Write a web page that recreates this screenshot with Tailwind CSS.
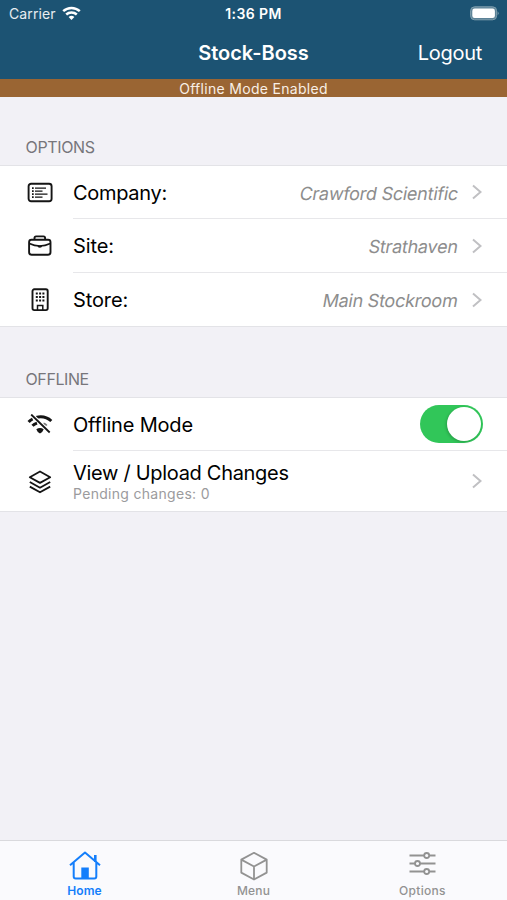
<!DOCTYPE html>
<html lang="en">
<head>
<meta charset="utf-8">
<title>Stock-Boss</title>
<script src="https://cdn.jsdelivr.net/npm/@tailwindcss/browser@4"></script>
</head>
<body class="w-[507px] h-[900px] overflow-hidden bg-[#f2f1f6] font-['Inter',sans-serif] text-black flex flex-col">
<header class="h-[79px] shrink-0 bg-[#1c5373] text-white">
  <div class="h-[27px] grid grid-cols-3 items-center px-[9px]">
    <div class="flex items-center gap-1.5 text-[14px] leading-[27px] text-white/90"><span class="tracking-[0.1px]">Carrier</span>
      <svg class="w-[19px] h-[15px]" viewBox="0 0 19 15" fill="none" stroke="#fff" stroke-width="2.500"><path d="M1.200 5.200C6 .8 13 .8 17.800 5.200M4.200 8.500c3-2.800 7.600-2.800 10.600 0"/><path d="M9.500 14l-2.900-3q2.900-2.300 5.800 0z" fill="#fff" stroke="none"/></svg>
    </div>
    <div class="text-center text-[14px] font-semibold tracking-[0.4px]">1:36 PM</div>
    <svg class="justify-self-end -mr-px w-[29px] h-[15px]" viewBox="0 0 29 15"><rect x=".6" y=".8" width="26" height="13" rx="4" fill="#5c8297" stroke="#7f9fae"/><rect x="2.300" y="2.600" width="22.600" height="9.400" rx="2.300" fill="#fff"/><path d="M27.600 5.200q2 2.100 0 4.200z" fill="#7f9fae"/></svg>
  </div>
  <div class="h-[52px] grid grid-cols-[1fr_auto_1fr] items-center px-[25px]">
    <span></span>
    <h1 class="text-[20px] font-semibold">Stock-Boss</h1>
    <span class="justify-self-end text-[20px] tracking-[-0.3px]">Logout</span>
  </div>
</header>
<div class="h-[18px] shrink-0 bg-[#9a6533] text-[#f8efe6] text-center text-[14px] leading-[19px] tracking-[0.3px]">Offline Mode Enabled</div>
<main class="grow">
  <h2 class="h-[68px] pl-[25.500px] pt-[40px] text-[16px] leading-5 text-[#77767b] tracking-[-0.350px]">OPTIONS</h2>
  <section class="h-[162px] bg-white border-y border-[#e3e3e7]">
    <div class="h-[53px] flex items-center">
      <svg class="ml-[27px] w-[26px] h-[22px] mr-5" viewBox="0 0 26 22" fill="none" stroke="#151515"><rect x="1.600" y="1.700" width="23" height="17.600" rx="2.500" stroke-width="1.900"/><path d="M8 6.100h11M8 9.100h7.500M8 12.100h12.500M8 15.100h7.500" stroke-width="1.300"/><path d="M5 6.100h1.700M5 9.100h1.700M5 12.100h1.700M5 15.100h1.700" stroke-width="1.600"/></svg>
      <div class="grow h-full border-b border-[#e7e7ea] flex items-center pr-[25px]"><span class="pt-0.5 text-[20px] tracking-[-0.3px]">Company:</span><span class="ml-auto pt-0.5 text-[18px] inline-block -skew-x-10 text-[#8d8d8d] tracking-[-0.250px]">Crawford Scientific</span><svg class="ml-3.5 w-[10px] h-[16px]" viewBox="0 0 10 16" fill="none" stroke="#c0c0c3" stroke-width="2"><path d="M1 1.500L8.500 8 1 14.500"/></svg></div>
    </div>
    <div class="h-[54px] flex items-center">
      <svg class="ml-[27px] w-[26px] h-[22px] mr-5" viewBox="0 0 26 22" fill="none" stroke="#151515" stroke-width="1.900"><rect x="2.100" y="4.800" width="21.400" height="14.900" rx="2.400"/><path d="M7.500 4.500V3q0-1.600 1.600-1.600h7.400q1.600 0 1.600 1.600v1.500"/><path d="M2.300 8.500q10.500 5 21 0" stroke-width="1.600"/><path d="M10.300 10.500h5q-.3 2.300-2.500 2.300t-2.500-2.300z" fill="#151515" stroke="none"/></svg>
      <div class="grow h-full border-b border-[#e7e7ea] flex items-center pr-[25px]"><span class="pt-px text-[20px] tracking-[-0.1px]">Site:</span><span class="ml-auto pt-0.5 text-[18px] inline-block -skew-x-10 text-[#8d8d8d] tracking-[-0.250px]">Strathaven</span><svg class="ml-3.5 w-[10px] h-[16px]" viewBox="0 0 10 16" fill="none" stroke="#c0c0c3" stroke-width="2"><path d="M1 1.500L8.500 8 1 14.500"/></svg></div>
    </div>
    <div class="h-[53px] flex items-center">
      <svg class="ml-[27px] w-[26px] h-[24px] mr-5" viewBox="0 0 26 24" fill="none" stroke="#151515"><rect x="5.500" y="1.300" width="15.200" height="20.800" rx="1.800" stroke-width="1.900"/><path d="M10.500 22v-4.500h5.300V22" stroke-width="1.500"/><path d="M9.800 4.500v10M13.100 4.500v10M16.400 4.500v10" stroke-width="2" stroke-dasharray="2 1.500"/></svg>
      <div class="grow h-full flex items-center pr-[25px]"><span class="pt-px text-[20px] tracking-[-0.1px]">Store:</span><span class="ml-auto pt-0.5 text-[18px] inline-block -skew-x-10 text-[#8d8d8d] tracking-[-0.250px]">Main Stockroom</span><svg class="ml-3.5 w-[10px] h-[16px]" viewBox="0 0 10 16" fill="none" stroke="#c0c0c3" stroke-width="2"><path d="M1 1.500L8.500 8 1 14.500"/></svg></div>
    </div>
  </section>
  <h2 class="h-[70px] pl-[25.500px] pt-[42px] text-[16px] leading-5 text-[#77767b] tracking-[-0.4px]">OFFLINE</h2>
  <section class="h-[115px] bg-white border-y border-[#e3e3e7]">
    <div class="h-[53px] flex items-center">
      <svg class="ml-[27px] w-[26px] h-[22px] mr-5" viewBox="0 0 26 22" fill="none"><g stroke="#151515" stroke-width="3"><path d="M9 3.400Q18 1.200 24.300 7M1.600 8Q3.200 6.200 5.600 5"/><path d="M5.500 11.800q1.700-1.700 4.500-2.700"/><path d="M16.500 9.300q2.200.8 3.300 2.200" stroke="#777" stroke-width="1.800"/></g><path d="M9.300 15.300q3.700-2.500 7.400 0-.6 2.400-3.700 4.200-3.100-1.800-3.700-4.200z" fill="#151515"/><path d="M5.200 .3l15.500 15.500" stroke="#fff" stroke-width="2.600"/><path d="M4.200 .5l18.500 18" stroke="#151515" stroke-width="1.800"/></svg>
      <div class="grow h-full border-b border-[#e7e7ea] flex items-center justify-between pr-[24px]"><span class="pt-0.5 text-[20px] tracking-[-0.180px]">Offline Mode</span><span class="w-[63px] h-[38px] rounded-full bg-[#31c659] flex items-center justify-end p-[2px]"><span class="size-[34px] rounded-full bg-white shadow-[-1px_1px_3px_rgba(0,0,0,0.2)]"></span></span></div>
    </div>
    <div class="h-[60px] flex items-center">
      <svg class="ml-[27px] mt-0.5 w-[26px] h-[26px] mr-5" viewBox="0 0 26 26" fill="none" stroke="#151515" stroke-width="1.800" stroke-linejoin="round"><path d="M13 2.500l10.200 5.700L13 13.900 2.800 8.200zM2.800 13L13 18.700 23.200 13M2.800 17.600L13 23.300l10.200-5.700"/></svg>
      <div class="grow flex items-center justify-between pr-[25px]"><div class="pt-px"><div class="text-[20px] leading-6 tracking-[-0.3px]">View / Upload Changes</div><div class="text-[14px] leading-[17px] tracking-[0.3px] text-[#9b9b9d]">Pending changes: 0</div></div><svg class="w-[10px] h-[16px]" viewBox="0 0 10 16" fill="none" stroke="#c0c0c3" stroke-width="2"><path d="M1 1.500L8.500 8 1 14.500"/></svg></div>
    </div>
  </section>
</main>
<nav class="h-[60px] shrink-0 bg-[#fafafd] border-t border-[#d9d9dd] grid grid-cols-3 text-[12px] leading-[18px] font-medium text-[#929292]">
  <div class="flex flex-col items-center pt-[9px] text-[#147efb]">
    <svg class="w-[32px] h-[32px]" viewBox="0 0 32 32" fill="none" stroke="currentColor" stroke-width="2" stroke-linejoin="round"><path d="M1 15.200L16 2.500l15 12.700M4.700 12.500v14q0 2 2 2h18.600q2 0 2-2v-14"/><path d="M26.300 5v7" stroke-width="2.600"/><path d="M12.300 17.500h7.500v11h-7.500z" fill="currentColor" stroke="none"/></svg>
    <span class="font-semibold tracking-[0.1px]">Home</span>
  </div>
  <div class="flex flex-col items-center pt-[9px]">
    <svg class="w-[32px] h-[32px]" viewBox="0 0 32 32" fill="none" stroke="currentColor" stroke-width="1.800" stroke-linejoin="round"><path d="M16 2.800l12.700 6.800v13L16 29.500 3.300 22.600v-13zM3.300 9.600L16 16.500l12.700-6.900M16 16.500v13"/></svg>
    <span class="tracking-[0.150px]">Menu</span>
  </div>
  <div class="flex flex-col items-center pt-[9px]">
    <svg class="w-[32px] h-[32px]" viewBox="0 0 32 32" fill="none" stroke="currentColor" stroke-width="1.800"><path d="M2.500 5.500h14.500M22.500 5.500h6M2.500 13.500h5.500M13 13.500h15.500M2.500 21.500h14.500M22.500 21.500h6"/><circle cx="19.700" cy="5.500" r="2.500"/><circle cx="10.500" cy="13.500" r="2.500"/><circle cx="19.700" cy="21.500" r="2.500"/></svg>
    <span class="tracking-[0.3px]">Options</span>
  </div>
</nav>
</body>
</html>
